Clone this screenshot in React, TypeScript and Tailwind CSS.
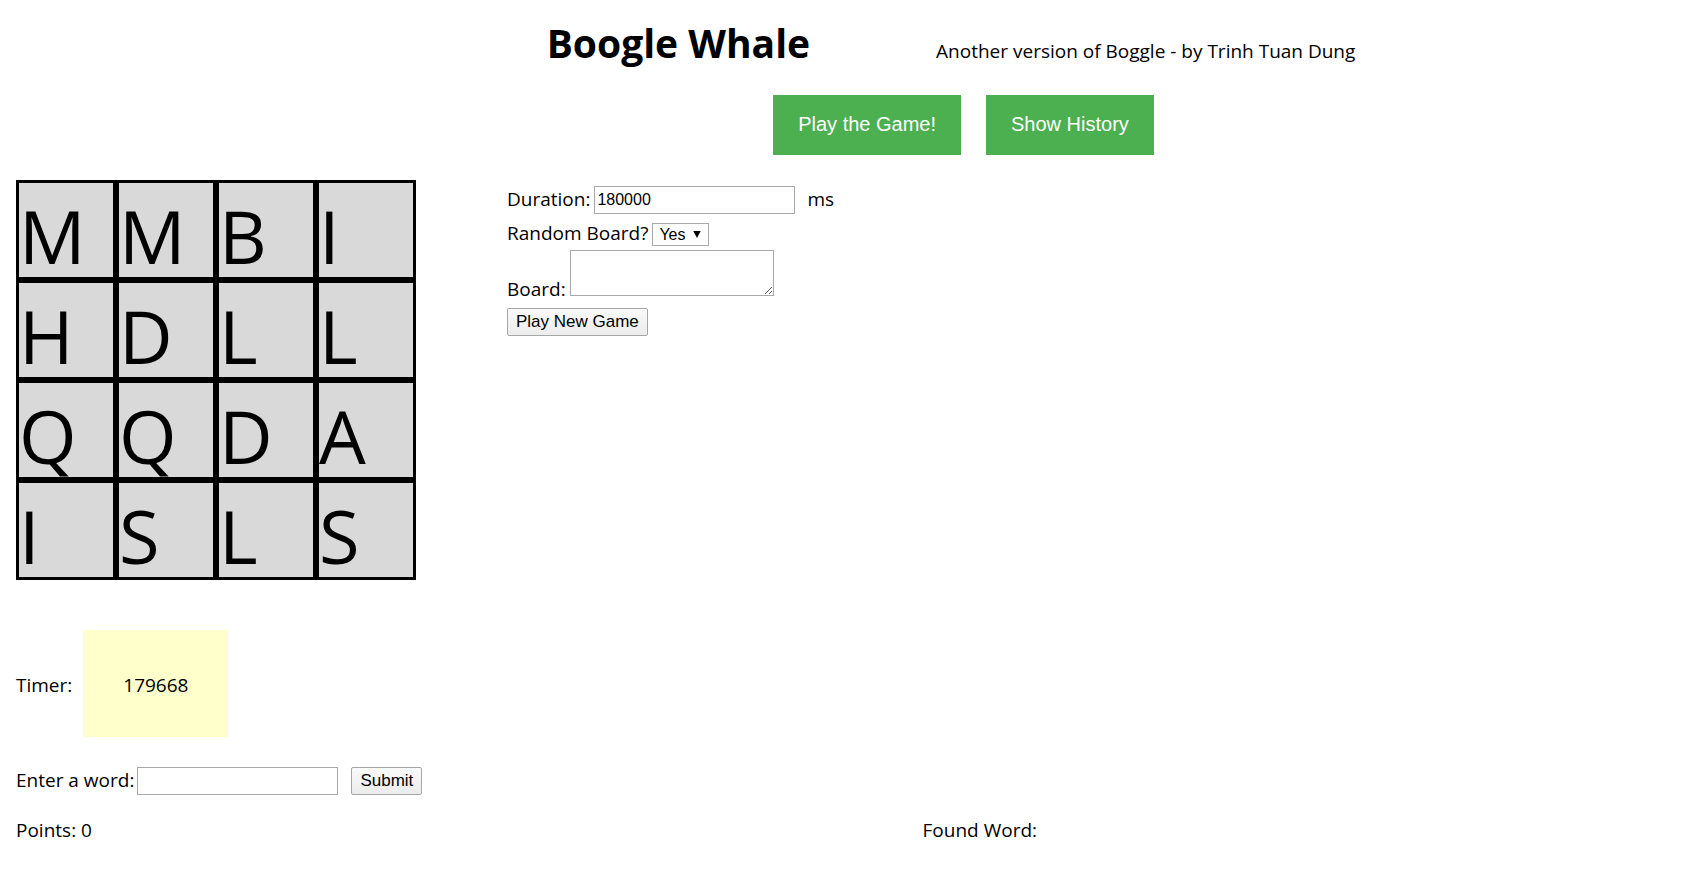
import { useState } from "react";

const letters = ["M", "M", "B", "I", "H", "D", "L", "L", "Q", "Q", "D", "A", "I", "S", "L", "S"];

const field =
  "h-7 w-[201px] border border-[#a9a9a9] bg-white px-[2px] font-['Liberation_Sans',sans-serif] text-base text-black outline-none";
const smallButton =
  "h-7 rounded-[2px] border border-[#a6a6a6] bg-linear-to-b from-[#fafafa] to-[#ececec] px-2 font-['Liberation_Sans',sans-serif] text-[17px] leading-5 text-black";
const bigButton =
  "h-[60px] bg-[#4caf50] px-[25px] pb-[2px] font-['Liberation_Sans',sans-serif] text-xl text-white";

export default function App() {
  const [duration, setDuration] = useState("180000");
  const [random, setRandom] = useState("Yes");
  const [board, setBoard] = useState("");
  const [word, setWord] = useState("");

  return (
    <div className="bg-white px-4 pt-[15px] font-['Open_Sans',sans-serif] text-[19px] leading-[26px] text-black">
      <header className="flex flex-col items-center pl-[200px]">
        <div className="flex items-baseline gap-[126px] whitespace-nowrap">
          <h1 className="text-[39px] leading-[56px] font-bold">Boogle Whale</h1>
          <p>Another version of Boggle - by Trinh Tuan Dung</p>
        </div>
        <nav className="mt-6 flex gap-[25px] pl-[25px]">
          <button type="button" className={bigButton}>Play the Game!</button>
          <button type="button" className={bigButton}>Show History</button>
        </nav>
      </header>

      <main className="mt-[25px]">
        <div className="flex items-start gap-[91px]">
          <div className="grid shrink-0 grid-cols-[repeat(4,100px)]">
            {letters.map((letter, i) => (
              <div
                key={i}
                className="h-[100px] border-[3px] border-black bg-[#d9d9d9] pt-[3px] text-[74px] leading-[100px]"
              >
                {letter}
              </div>
            ))}
          </div>

          <form className="flex flex-col items-start pt-[6px]" onSubmit={(e) => e.preventDefault()}>
            <div className="flex items-start gap-1">
              <label htmlFor="duration">Duration:</label>
              <input id="duration" className={field} value={duration} onChange={(e) => setDuration(e.target.value)} />
              <span className="pl-2">ms</span>
            </div>
            <div className="mt-[6px] flex items-end gap-1">
              <label htmlFor="random">Random Board?</label>
              <div className="relative flex">
                <select
                  id="random"
                  className="h-[23px] w-[57px] appearance-none border border-[#a9a9a9] bg-white pl-[6px] font-['Liberation_Sans',sans-serif] text-base leading-5 outline-none"
                  value={random}
                  onChange={(e) => setRandom(e.target.value)}
                >
                  <option>Yes</option>
                  <option>No</option>
                </select>
                <svg className="pointer-events-none absolute top-2 right-2 h-[7px] w-2" viewBox="0 0 8 7" aria-hidden="true">
                  <path d="M0.3 0H7.7L4 7Z" />
                </svg>
              </div>
            </div>
            <div className="mt-1 flex items-end gap-1">
              <label htmlFor="board">Board:</label>
              <textarea
                id="board"
                className="mb-[6px] block h-[46px] w-[204px] border border-[#a9a9a9] bg-white p-[2px] font-['Liberation_Mono',monospace] text-base outline-none"
                value={board}
                onChange={(e) => setBoard(e.target.value)}
              />
            </div>
            <button type="submit" className={`mt-[6px] ${smallButton}`}>Play New Game</button>
          </form>
        </div>

        <div className="mt-[50px] flex items-baseline gap-[11px]">
          <span>Timer:</span>
          <output className="bg-[#ffffcc] px-10 pt-[42px] pb-[38px] leading-[27px]">179668</output>
        </div>

        <form className="mt-[30px] flex items-start" onSubmit={(e) => e.preventDefault()}>
          <label htmlFor="word" className="mr-[3px]">Enter a word:</label>
          <input id="word" className={field} value={word} onChange={(e) => setWord(e.target.value)} />
          <button type="submit" className={`ml-[13px] ${smallButton}`}>Submit</button>
        </form>

        <div className="mt-[22px] grid grid-cols-[19fr_16fr]">
          <span>Points: 0</span>
          <span>Found Word:</span>
        </div>
      </main>
    </div>
  );
}
